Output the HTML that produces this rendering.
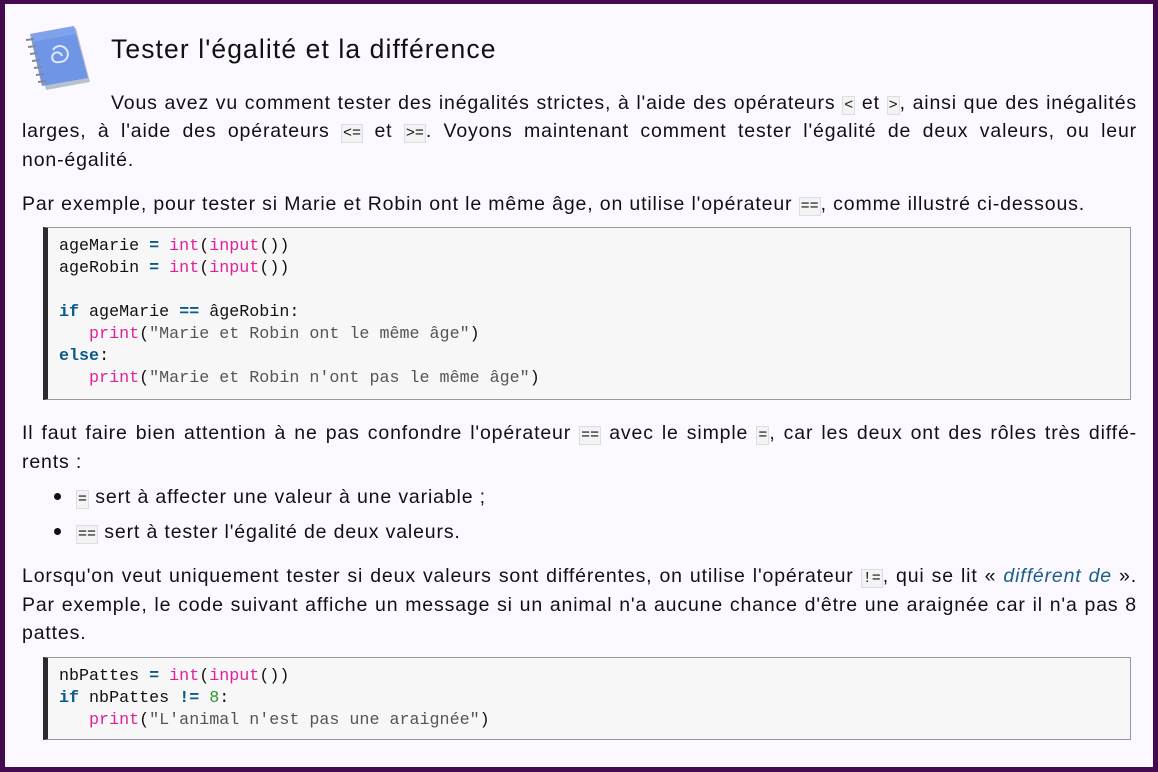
<!DOCTYPE html>
<html><head><meta charset="utf-8"><style>
html,body{margin:0;padding:0}
body{width:1158px;height:772px;overflow:hidden;background:#fbf8ff;position:relative;font-family:"Liberation Sans","DejaVu Sans",sans-serif;font-size:19.5px;color:#111;letter-spacing:0.85px}
.frame{position:absolute;left:0;top:0;width:1148px;height:763px;border:5px solid #45094f;border-top-width:4px;border-bottom-width:5px}
.t{position:absolute;left:22px;width:1115px;line-height:28.5px;white-space:nowrap;margin-top:2px}
.j{text-align:justify;text-align-last:justify}
code{font-family:"Liberation Mono",monospace;font-size:15px;letter-spacing:0;background:#f3f3f3;border:1px solid #ddd;padding:0 1px}
.code{position:absolute;left:43px;width:1088px;background:#f7f7f7;border:1px solid #999;border-left:5px solid #2b2b2b;font-family:"Liberation Mono",monospace;font-size:16.7px;letter-spacing:0;line-height:22px;padding:8px 0 0 11px;box-sizing:border-box;white-space:pre;color:#111}
.k{color:#0b5a8c;font-weight:bold}.o{color:#0b5a8c;font-weight:bold}.f{color:#e0209a}.s{color:#555}.n{color:#2a9a2a}
h1{position:absolute;left:111px;top:32px;margin:0;font-weight:normal;font-size:26.5px;letter-spacing:1.1px;line-height:34px}
i{color:#1a5f8a}
ul{margin:0;padding:0;list-style:none}
li{position:relative;padding-left:54px}
li:before{content:"";position:absolute;left:32px;top:12px;width:7px;height:7px;border-radius:50%;background:#111}
</style></head><body>
<div class="frame"></div>
<svg style="position:absolute;left:22px;top:24px" width="72" height="68" viewBox="0 0 72 68">
<path d="M12 14 L54 4 L68 58 L24 66 Z" fill="#b8c0cc"/>
<path d="M8 10 L52 2 L66 54 L20 62 Z" fill="#6f95e6"/>
<path d="M8 10 L52 2 L54 10 L10 18Z" fill="#8cacf0" opacity=".6"/>
<g stroke="#888" stroke-width="2">
<line x1="4" y1="16" x2="12" y2="15"/><line x1="6" y1="23" x2="14" y2="22"/><line x1="8" y1="30" x2="16" y2="29"/><line x1="10" y1="37" x2="18" y2="36"/><line x1="12" y1="44" x2="20" y2="43"/><line x1="14" y1="51" x2="22" y2="50"/><line x1="16" y1="58" x2="24" y2="57"/></g>
<path d="M40 32 a5 5 0 1 0 -3 6 a8 8 0 1 0 -6 -12" fill="none" stroke="#dfe8ff" stroke-width="2"/>
</svg>
<h1>Tester l'égalité et la différence</h1>
<div class="t j" style="top:87px;left:111px;width:1026px">Vous avez vu comment tester des inégalités strictes, à l'aide des opérateurs <code>&lt;</code> et <code>&gt;</code>, ainsi que des inégalités</div>
<div class="t j" style="top:115px">larges, à l'aide des opérateurs <code>&lt;=</code> et <code>&gt;=</code>. Voyons maintenant comment tester l'égalité de deux valeurs, ou leur</div>
<div class="t" style="top:144px">non-égalité.</div>
<div class="t" style="top:188px">Par exemple, pour tester si Marie et Robin ont le même âge, on utilise l'opérateur <code>==</code>, comme illustré ci-dessous.</div>
<div class="code" style="top:227px;height:173px">ageMarie <span class="o">=</span> <span class="f">int</span>(<span class="f">input</span>())
ageRobin <span class="o">=</span> <span class="f">int</span>(<span class="f">input</span>())

<span class="k">if</span> ageMarie <span class="o">==</span> âgeRobin:
   <span class="f">print</span>(<span class="s">"Marie et Robin ont le même âge"</span>)
<span class="k">else</span>:
   <span class="f">print</span>(<span class="s">"Marie et Robin n'ont pas le même âge"</span>)</div>
<div class="t j" style="top:417px">Il faut faire bien attention à ne pas confondre l'opérateur <code>==</code> avec le simple <code>=</code>, car les deux ont des rôles très diffé-</div>
<div class="t" style="top:446px">rents :</div>
<ul class="t" style="top:479px;line-height:33px">
<li><code>=</code> sert à affecter une valeur à une variable ;</li>
<li><code>==</code> sert à tester l'égalité de deux valeurs.</li></ul>
<div class="t j" style="top:560px">Lorsqu'on veut uniquement tester si deux valeurs sont différentes, on utilise l'opérateur <code>!=</code>, qui se lit « <i>différent de</i> ».</div>
<div class="t j" style="top:589px">Par exemple, le code suivant affiche un message si un animal n'a aucune chance d'être une araignée car il n'a pas 8</div>
<div class="t" style="top:617px">pattes.</div>
<div class="code" style="top:657px;height:83px">nbPattes <span class="o">=</span> <span class="f">int</span>(<span class="f">input</span>())
<span class="k">if</span> nbPattes <span class="o">!=</span> <span class="n">8</span>:
   <span class="f">print</span>(<span class="s">"L'animal n'est pas une araignée"</span>)</div>
</body></html>
